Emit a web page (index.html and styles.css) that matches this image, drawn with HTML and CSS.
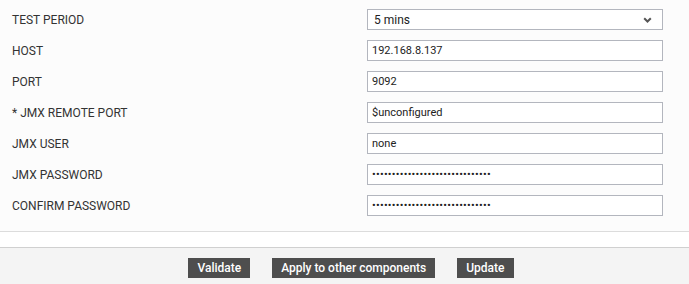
FILE: index.html
```html
<!DOCTYPE html>
<html lang="en">
<head>
  <meta charset="UTF-8">
  <title>Kafka settings</title>
  <link rel="stylesheet" href="styles.css">
</head>
<body>
  <div class="form">
    <label>TEST PERIOD</label>
    <div class="select">
      <span>5 mins</span>
      <svg width="9" height="6" viewBox="0 0 9 6"><path d="M1.2 1.2 L4.5 4.5 L7.8 1.2" fill="none" stroke="#555" stroke-width="2"/></svg>
    </div>

    <label>HOST</label>
    <input type="text" value="192.168.8.137">

    <label>PORT</label>
    <input type="text" value="9092">

    <label>* JMX REMOTE PORT</label>
    <input type="text" value="$unconfigured">

    <label>JMX USER</label>
    <input type="text" value="none">

    <label>JMX PASSWORD</label>
    <input type="password" value="aaaaaaaaaaaaaaaaaaaaaaaaaaaaaa">

    <label>CONFIRM PASSWORD</label>
    <input type="password" value="aaaaaaaaaaaaaaaaaaaaaaaaaaaaaa">
  </div>

  <div class="spacer"></div>

  <div class="actions">
    <button class="btn">Validate</button>
    <button class="btn">Apply to other components</button>
    <button class="btn">Update</button>
  </div>
</body>
</html>
```

FILE: styles.css
```css
body {
  margin: 0;
  font-family: Roboto, "Liberation Sans", sans-serif;
  font-size: 12px;
  color: #333;
  background: #fcfcfc;
}
.form {
  display: grid;
  grid-template-columns: 355px 296px;
  row-gap: 10px;
  padding: 9px 0 15px 12px;
  align-items: center;
  border-bottom: 1px solid #dcdcdc;
}
label { color: #333; }
input, .select {
  box-sizing: border-box;
  height: 21px;
  border: 1px solid #b3b6be;
  background: #fff;
  font-family: Roboto, "Liberation Sans", sans-serif;
  font-size: 11px;
  color: #222;
  padding: 0 4px;
  margin: 0;
  outline: none;
}
input[type="password"] { font-size: 11px; letter-spacing: 0.25px; }
.select {
  display: flex;
  align-items: center;
  justify-content: space-between;
  padding: 0 10px 0 6px;
  font-size: 12px;
}
.spacer {
  height: 15px;
  background: #fff;
  border-bottom: 1px solid #d0d0d0;
}
.actions {
  display: flex;
  justify-content: center;
  gap: 22px;
  padding: 10px 0 0 13px;
  height: 36px;
  box-sizing: border-box;
  background: #f4f4f4;
}
.btn {
  height: 20px;
  padding: 0 9px;
  border: none;
  background: #4e4e4e;
  color: #fff;
  font-family: Roboto, "Liberation Sans", sans-serif;
  font-size: 12px;
  font-weight: 500;
  cursor: pointer;
}
```
